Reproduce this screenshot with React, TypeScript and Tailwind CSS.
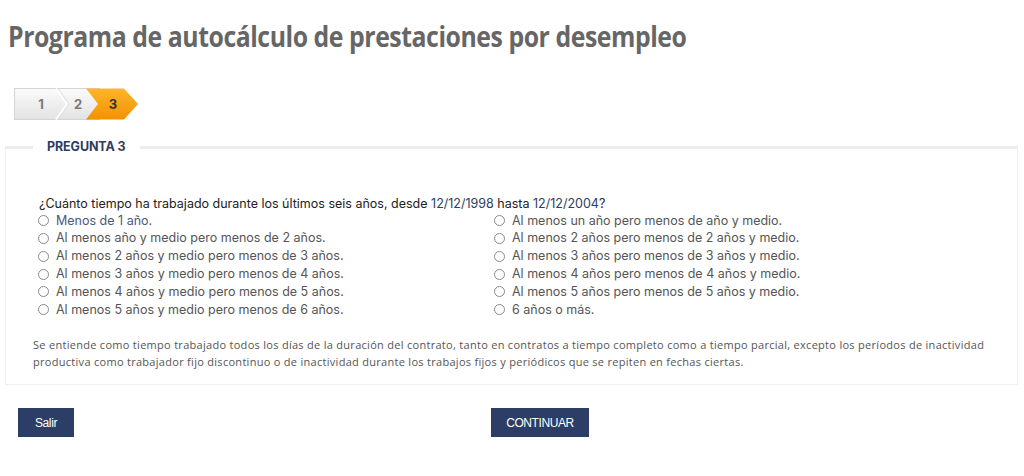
import React from "react";

const left = [
  "Menos de 1 año.",
  "Al menos año y medio pero menos de 2 años.",
  "Al menos 2 años y medio pero menos de 3 años.",
  "Al menos 3 años y medio pero menos de 4 años.",
  "Al menos 4 años y medio pero menos de 5 años.",
  "Al menos 5 años y medio pero menos de 6 años.",
];
const right = [
  "Al menos un año pero menos de año y medio.",
  "Al menos 2 años pero menos de 2 años y medio.",
  "Al menos 3 años pero menos de 3 años y medio.",
  "Al menos 4 años pero menos de 4 años y medio.",
  "Al menos 5 años pero menos de 5 años y medio.",
  "6 años o más.",
];

function Steps() {
  return (
    <svg width="126" height="33" viewBox="0 0 126 33">
      <defs>
        <linearGradient id="g" x1="0" y1="0" x2="0" y2="1">
          <stop offset="0" stopColor="#fbfbfb" />
          <stop offset="1" stopColor="#e3e3e3" />
        </linearGradient>
        <linearGradient id="o" x1="0" y1="0" x2="0" y2="1">
          <stop offset="0" stopColor="#ffb52e" />
          <stop offset="1" stopColor="#f39200" />
        </linearGradient>
      </defs>
      <rect x="0.5" y="0.5" width="85" height="31" fill="url(#g)" stroke="#d4d4d4" />
      <polyline points="42,0.5 53,16 42,31.5" fill="none" stroke="#ffffff" strokeWidth="2" />
      <polyline points="44,0.5 55,16 44,31.5" fill="none" stroke="#dcdcdc" strokeWidth="1" />
      <polygon points="72,0.5 110,0.5 124,16 110,31.5 72,31.5 84,16" fill="url(#o)" />
      <text x="27" y="21" fontFamily="Inter, sans-serif" fontWeight="700" fontSize="13" fill="#7a7a7a" textAnchor="middle">1</text>
      <text x="64" y="21" fontFamily="Inter, sans-serif" fontWeight="700" fontSize="13" fill="#7a7a7a" textAnchor="middle">2</text>
      <text x="99" y="21" fontFamily="Inter, sans-serif" fontWeight="700" fontSize="13" fill="#333333" textAnchor="middle">3</text>
    </svg>
  );
}

function Radio({ label, first }: { label: string; first?: boolean }) {
  return (
    <label className="flex items-center h-[17.8px] gap-[7px]">
      <span className="w-[11px] h-[11px] rounded-full border border-[#8a8a8a] bg-white shrink-0" />
      <span className={first ? "text-[#4b5878]" : "text-[#555]"}>{label}</span>
    </label>
  );
}

export default function App() {
  return (
    <div className="w-[1024px] h-[476px] bg-white overflow-hidden" style={{ fontFamily: "Inter, 'Noto Sans', sans-serif" }}>
      <div className="pl-[8px] pt-[18px] h-[86px]">
        <h1 className="text-[28px] font-bold text-[#666] leading-[36px] tracking-[-0.5px] origin-left scale-x-[0.886] whitespace-nowrap" style={{ fontFamily: "'Open Sans', sans-serif" }}>
          Programa de autocálculo de prestaciones por desempleo
        </h1>
      </div>
      <div className="pl-[14px] pt-[2px] h-[52px]">
        <Steps />
      </div>
      <fieldset className="ml-[5px] w-[1013px] h-[247px] border border-[#f0f0f0] border-t-[3px] border-t-[#ececec] px-[32px]">
        <legend className="ml-[-5px] px-[14px] text-[12.5px] font-bold text-[#2f3d5f] tracking-[-0.1px]">PREGUNTA 3</legend>
        <div className="pt-[39px] text-[12.5px] text-[#222] leading-[18px]">
          <div className="pl-[1px] h-[16px] leading-[16px]">
            ¿Cuánto tiempo ha trabajado durante los últimos seis años, desde <span className="text-[#2c3e66]">12/12/1998</span> hasta <span className="text-[#2c3e66]">12/12/2004</span>?
          </div>
          <div className="grid grid-cols-[456px_1fr]">
            <div>{left.map((l, i) => <Radio key={l} label={l} first={i === 0} />)}</div>
            <div>{right.map((l) => <Radio key={l} label={l} />)}</div>
          </div>
        </div>
        <p className="mt-[17px] ml-[-5px] text-[11px] leading-[17px] text-[#555] tracking-[0.29px]" style={{ fontFamily: "'Open Sans', sans-serif" }}>
          Se entiende como tiempo trabajado todos los días de la duración del contrato, tanto en contratos a tiempo completo como a tiempo parcial, excepto los períodos de inactividad productiva como trabajador fijo discontinuo o de inactividad durante los trabajos fijos y periódicos que se repiten en fechas ciertas.
        </p>
      </fieldset>
      <div className="grid grid-cols-[473px_1fr] pl-[18px] pt-[23px]" style={{ fontFamily: "'Liberation Sans', sans-serif" }}>
        <div>
          <button className="w-[56px] h-[29px] bg-[#2c3e66] text-white text-[12px] tracking-[-0.4px]">Salir</button>
        </div>
        <div>
          <button className="w-[98px] h-[29px] bg-[#2c3e66] text-white text-[12px] tracking-[-0.4px]">CONTINUAR</button>
        </div>
      </div>
    </div>
  );
}
